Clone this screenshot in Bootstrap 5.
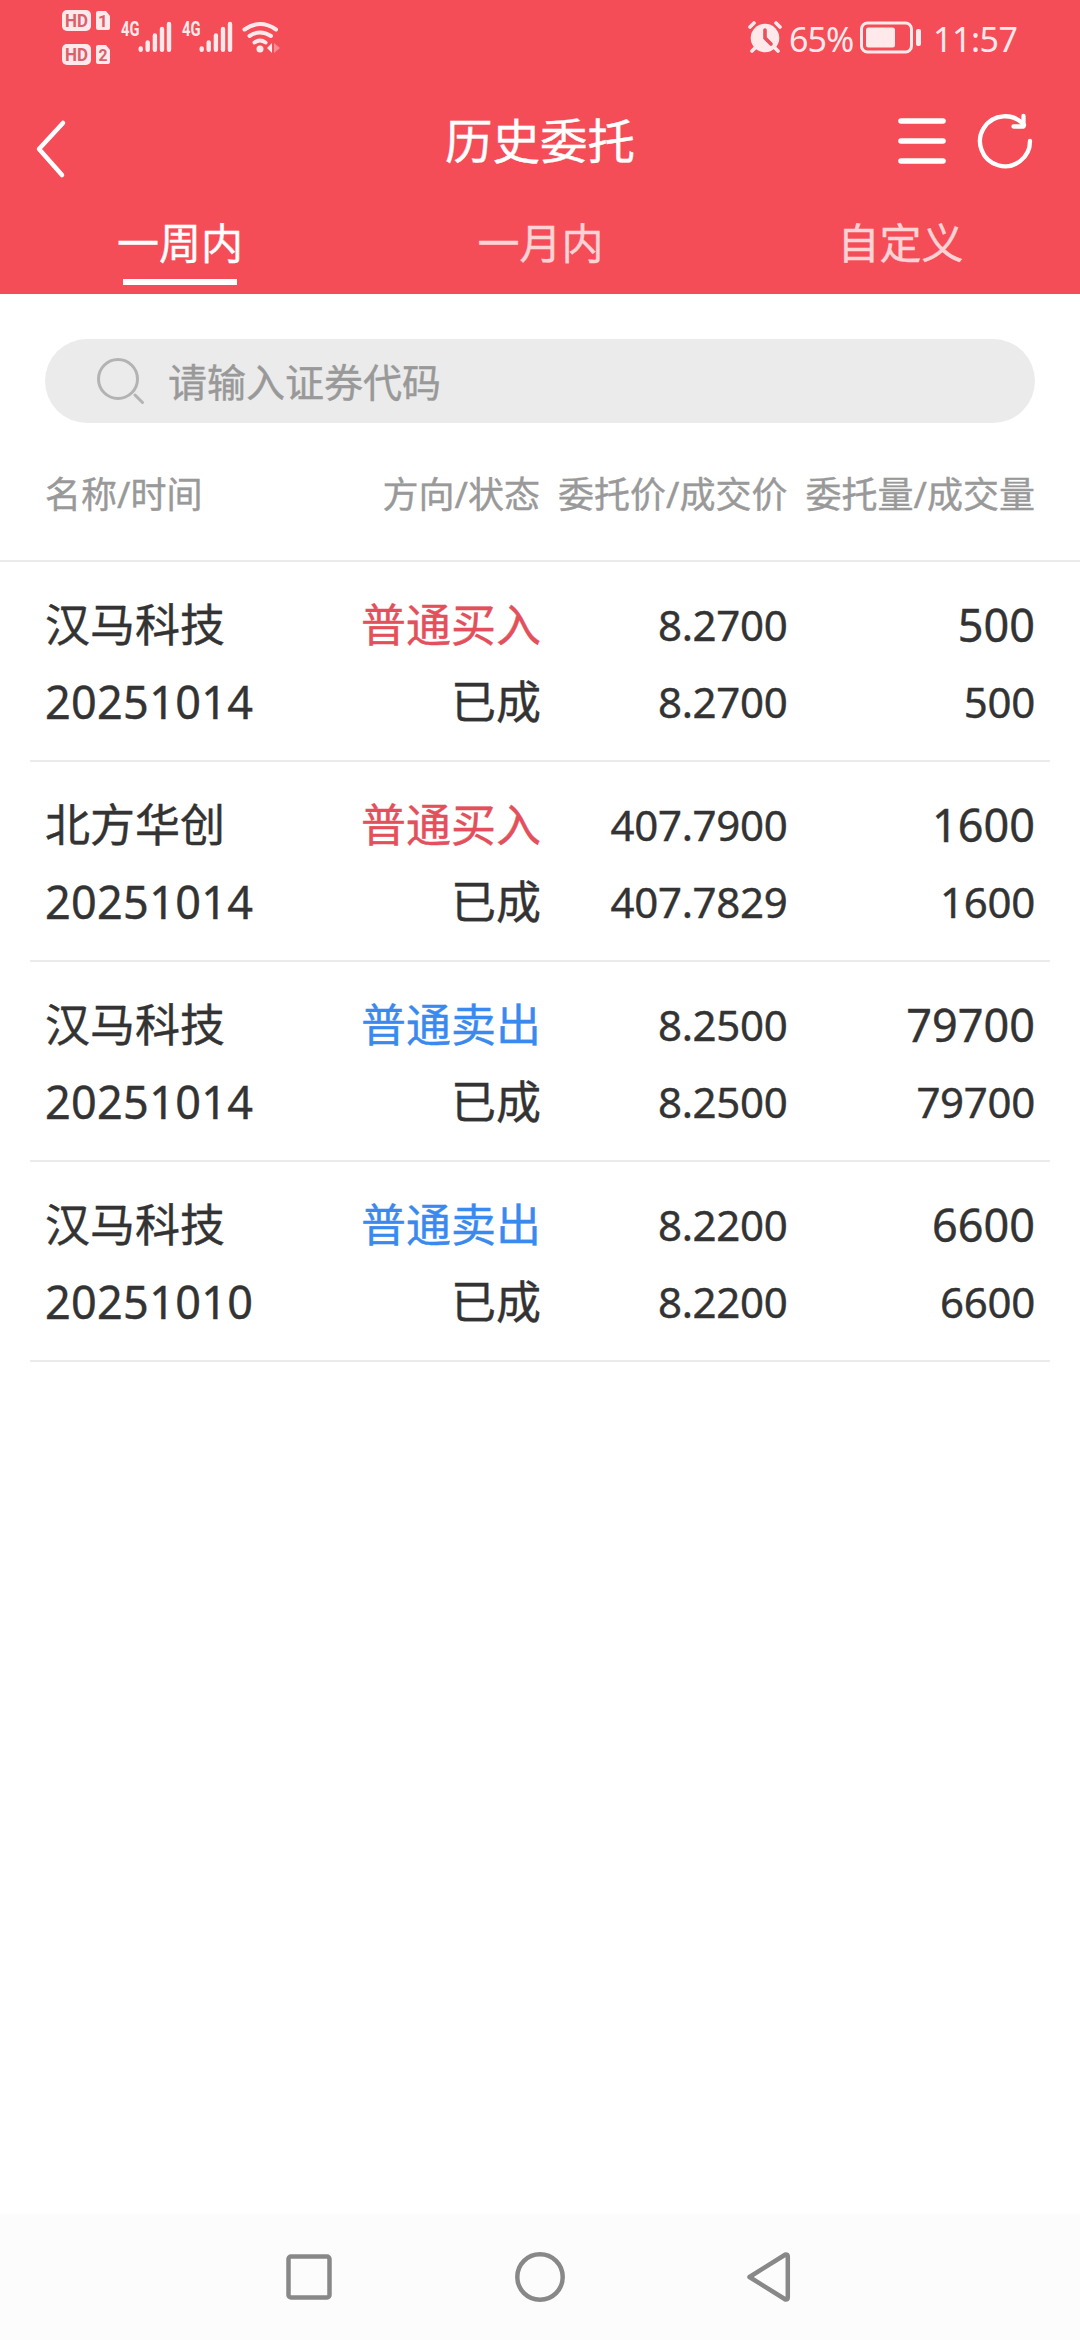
<!DOCTYPE html>
<html lang="zh-CN">
<head>
<meta charset="utf-8">
<meta name="viewport" content="width=device-width, initial-scale=1">
<title>历史委托</title>
<link href="https://cdn.jsdelivr.net/npm/bootstrap@5.3.0/dist/css/bootstrap.min.css" rel="stylesheet">
<style>
  body { font-family: "Noto Sans", "Noto Sans CJK SC", sans-serif; color: #333; background: #fff; min-height: 2340px; line-height: 1; -webkit-text-stroke: .4px; }
  svg { display: block; flex: none; -webkit-text-stroke: 0; }
  .app-head { background: #f54d58; height: 294px; color: #fff; }
  .status-bar { height: 76px; padding: 0 60px; color: #ffe9eb; -webkit-text-stroke: 0; }
  .status-text { font-size: 34px; line-height: 76px; padding-top: 2px; white-space: nowrap; }
  .battery-text { letter-spacing: -1px; width: 67px; }
  .clock-text { letter-spacing: -.5px; width: 87px; }
  .title-bar { height: 130px; padding: 0 46px 0 34px; }
  .title-side { width: 136px; }
  .title-text { font-size: 47.5px; line-height: 130px; padding-left: 12px; }
  .range-tabs { height: 88px; }
  .range-tabs .nav-link { padding: 0 0 0 1px; color: #ffd3d6; font-size: 42px; line-height: 74px; border-radius: 0; }
  .range-tabs .nav-link.active { color: #fff; padding: 0; }
  .range-tabs .nav-link.active::after { content: ""; display: block; width: 114px; height: 6px; margin: -1px auto 0; background: #fff; }
  .search-wrap { padding: 45px 45px 0; }
  .search-pill { height: 84px; background: #ebebeb; color: #999; font-size: 39px; padding-left: 52px; }
  .search-pill span { margin-left: 23px; line-height: 84px; padding-top: 2px; }
  .list-head { height: 139px; padding: 0 45px; border-bottom: 2px solid #ebebeb; color: #999; font-size: 36px; line-height: 144px; }
  .orders { padding: 0 30px; }
  .order { height: 200px; padding: 24px 15px 0; border-bottom: 2px solid #ebebeb; font-size: 45px; line-height: 77px; }
  .order .num { font-size: 42px; letter-spacing: -.3px; }
  .order .side { padding-right: 0; margin-right: -1px; }
  .digits { letter-spacing: .3px; }
  .buy { color: #e34f5a; }
  .sell { color: #3a89ee; }
  .sys-nav { height: 126px; background: #fcfcfc; padding: 0 285px; }
</style>
</head>
<body class="d-flex flex-column">
<header class="app-head">
  <div class="status-bar d-flex justify-content-between align-items-center">
    <svg width="222" height="76" viewBox="60 0 222 76" fill="#ffe9eb">
      <rect x="62" y="10" width="29" height="21" rx="5"/>
      <rect x="62" y="44" width="29" height="21" rx="5"/>
      <path d="M98 11h8l4 5v12q0 2-2 2H98q-2 0-2-2V13q0-2 2-2zM98 45h8l4 5v12q0 2-2 2H98q-2 0-2-2V47q0-2 2-2z"/>
      <g font-family="Roboto, sans-serif" font-weight="700" fill="#d9616b">
        <text x="65" y="27" font-size="18" textLength="23" lengthAdjust="spacingAndGlyphs">HD</text>
        <text x="65" y="61" font-size="18" textLength="23" lengthAdjust="spacingAndGlyphs">HD</text>
        <text x="98" y="27" font-size="17">1</text>
        <text x="98.500" y="61" font-size="17" textLength="9" lengthAdjust="spacingAndGlyphs">2</text>
      </g>
      <g font-family="Roboto, sans-serif" font-weight="700" font-size="19.500">
        <text x="121" y="36" textLength="18.500" lengthAdjust="spacingAndGlyphs">4G</text>
        <text x="182" y="36" textLength="18.500" lengthAdjust="spacingAndGlyphs">4G</text>
      </g>
      <g stroke="#ffe9eb" stroke-width="4.400" stroke-linecap="round">
        <path d="M140.700 48.500v1.200M147.700 42.500v7.200M154.900 35.500v14.200M162 29v20.700M169 24v25.700"/>
        <path d="M201.700 48.500v1.200M208.700 42.500v7.200M215.900 35.500v14.200M223 29v20.700M230 24v25.700"/>
      </g>
      <g fill="none" stroke="#ffe9eb" stroke-width="4" stroke-linecap="round">
        <path d="M244.500 29.500Q260 18.500 276 29.500M249.500 36Q260 29 271 36M254.500 42.500Q260 38.500 265.500 42.500"/>
      </g>
      <circle cx="260" cy="49" r="3.500"/>
      <path d="M272 43v10l-5-5z"/><path d="M274 43v10l6-5z" opacity=".4"/>
    </svg>
    <div class="d-flex align-items-center">
      <svg width="42" height="76" viewBox="747 0 42 76">
        <circle cx="765" cy="38" r="14.300" fill="#ffe9eb"/>
        <path d="M750 27l4-4M780 27l-4-4M752 51l4-4M778 51l-4-4" stroke="#ffe9eb" stroke-width="3.600" stroke-linecap="round"/>
        <path d="M765 30v8l6 6" fill="none" stroke="#e8505b" stroke-width="3.600" stroke-linecap="round"/>
      </svg>
      <span class="status-text battery-text">65%</span>
      <svg width="77" height="76" viewBox="857 0 77 76">
        <rect x="862.500" y="23" width="50" height="29" rx="6" fill="none" stroke="#ffe9eb" stroke-width="3"/>
        <rect x="867" y="27.500" width="29" height="20" rx="2.500" fill="#ffe9eb"/>
        <rect x="917" y="29" width="5" height="17" rx="2" fill="#ffe9eb"/>
      </svg>
      <span class="status-text clock-text">11:57</span>
    </div>
  </div>
  <div class="title-bar d-flex justify-content-between align-items-center">
    <div class="title-side">
      <svg width="34" height="130" viewBox="34 76 34 130" fill="none" stroke="#fff" stroke-width="4.500" stroke-linecap="round" stroke-linejoin="round"><path d="M63 123L39 149l23 26"/></svg>
    </div>
    <div class="title-text">历史委托</div>
    <div class="title-side">
      <svg width="136" height="130" viewBox="898 76 136 130" fill="none" stroke="#fff" stroke-linecap="round" stroke-linejoin="round">
        <path d="M901 121h42M901 141h42M901 161h42" stroke-width="5.600"/>
        <path d="M1030 141a25 25 0 1 1-6-16" stroke-width="4.300"/>
        <path d="M1023.500 116v10.500h-10" stroke-width="4.300"/>
      </svg>
    </div>
  </div>
  <nav class="range-tabs nav nav-fill row g-0">
    <a class="nav-link active col-4">一周内</a>
    <a class="nav-link col-4">一月内</a>
    <a class="nav-link col-4">自定义</a>
  </nav>
</header>

<main class="flex-grow-1">
  <div class="search-wrap">
    <div class="search-pill rounded-pill d-flex align-items-center">
      <svg width="48" height="84" viewBox="97 339 48 84" fill="none" stroke="#b3b3b3" stroke-width="3"><circle cx="118" cy="379" r="19.500"/><path d="M135 395l7.500 7.500" stroke-linecap="round"/></svg>
      <span>请输入证券代码</span>
    </div>
  </div>
  <div class="list-head text-nowrap">
    <div class="row g-0">
      <div class="col-3">名称/时间</div>
      <div class="col-3 d-flex justify-content-end">方向/状态</div>
      <div class="col-3 d-flex justify-content-end">委托价/成交价</div>
      <div class="col-3 d-flex justify-content-end">委托量/成交量</div>
    </div>
  </div>
  <div class="orders text-nowrap">
    <div class="order row g-0">
      <div class="col-3"><div>汉马科技</div><div class="digits">20251014</div></div>
      <div class="col-3 text-end"><div class="side buy">普通买入</div><div class="side">已成</div></div>
      <div class="col-3 text-end num"><div>8.2700</div><div>8.2700</div></div>
      <div class="col-3 text-end"><div>500</div><div class="num">500</div></div>
    </div>
    <div class="order row g-0">
      <div class="col-3"><div>北方华创</div><div class="digits">20251014</div></div>
      <div class="col-3 text-end"><div class="side buy">普通买入</div><div class="side">已成</div></div>
      <div class="col-3 text-end num"><div>407.7900</div><div>407.7829</div></div>
      <div class="col-3 text-end"><div>1600</div><div class="num">1600</div></div>
    </div>
    <div class="order row g-0">
      <div class="col-3"><div>汉马科技</div><div class="digits">20251014</div></div>
      <div class="col-3 text-end"><div class="side sell">普通卖出</div><div class="side">已成</div></div>
      <div class="col-3 text-end num"><div>8.2500</div><div>8.2500</div></div>
      <div class="col-3 text-end"><div>79700</div><div class="num">79700</div></div>
    </div>
    <div class="order row g-0">
      <div class="col-3"><div>汉马科技</div><div class="digits">20251010</div></div>
      <div class="col-3 text-end"><div class="side sell">普通卖出</div><div class="side">已成</div></div>
      <div class="col-3 text-end num"><div>8.2200</div><div>8.2200</div></div>
      <div class="col-3 text-end"><div>6600</div><div class="num">6600</div></div>
    </div>
  </div>
</main>

<footer class="sys-nav d-flex justify-content-between align-items-center">
  <svg width="48" height="126" viewBox="285 2214 48 126" fill="none" stroke="#888" stroke-width="4.500"><rect x="288.500" y="2256.500" width="41" height="41" rx="2.500"/></svg>
  <svg width="52" height="126" viewBox="514 2214 52 126" fill="none" stroke="#888" stroke-width="4.500"><circle cx="540" cy="2277" r="22.700"/></svg>
  <svg width="48" height="126" viewBox="747 2214 48 126" fill="none" stroke="#888" stroke-width="4.500" stroke-linejoin="round"><path d="M749.500 2277l36-22.500q2.300 0 2.300 2v41q0 2-2.300 2z"/></svg>
</footer>
<script src="https://cdn.jsdelivr.net/npm/bootstrap@5.3.0/dist/js/bootstrap.bundle.min.js"></script>
</body>
</html>
